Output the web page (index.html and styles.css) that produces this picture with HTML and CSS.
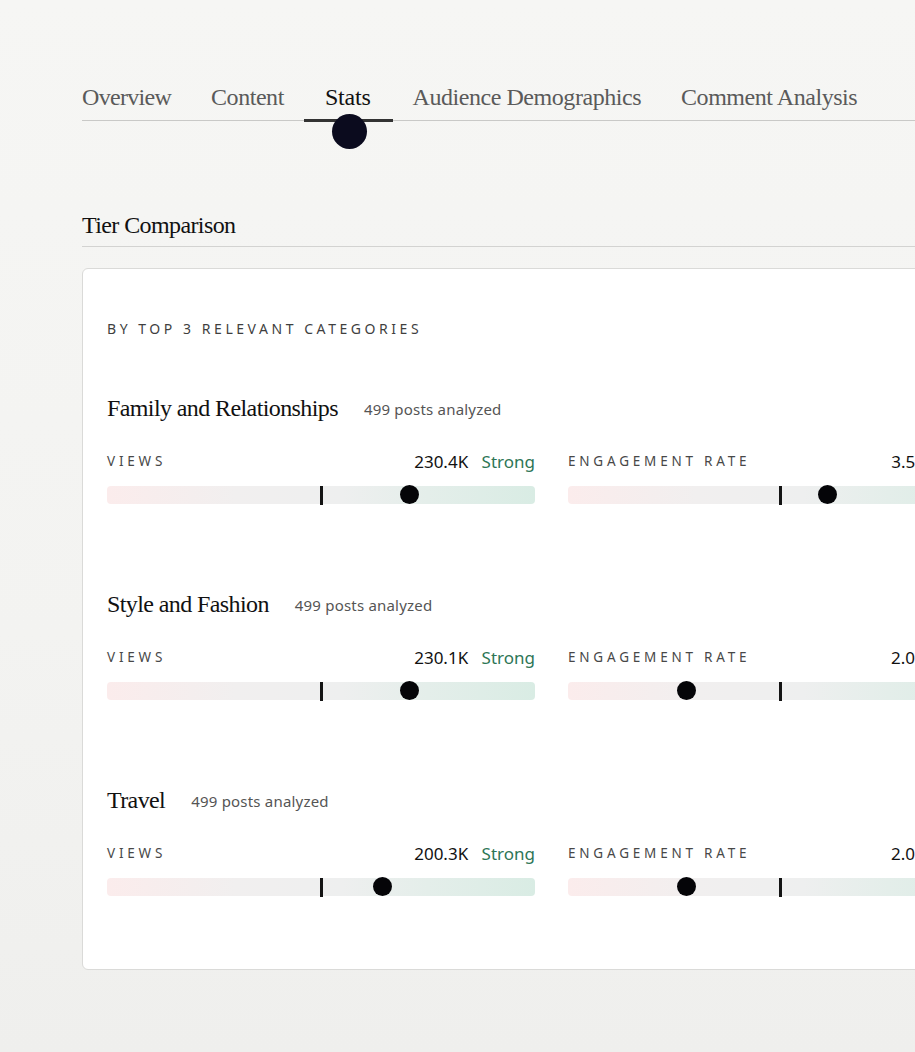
FILE: index.html
```html
<!DOCTYPE html>
<html lang="en">
<head>
  <meta charset="UTF-8" />
  <meta name="viewport" content="width=device-width, initial-scale=1.0"/>
  <title>Creator Stats - Tier Comparison</title>
  <link rel="stylesheet" href="styles.css">
</head>
<body>
  <div class="page">
    <nav class="tabs">
      <a class="tab">Overview</a>
      <a class="tab">Content</a>
      <a class="tab active">Stats</a>
      <a class="tab">Audience Demographics</a>
      <a class="tab">Comment Analysis</a>
    </nav>

    <h2 class="section-title">Tier Comparison</h2>

    <div class="card">
      <p class="card-label">By top 3 relevant categories</p>

      <div class="category">
        <div class="category-head">
          <h3>Family and Relationships</h3>
          <span class="posts">499 posts analyzed</span>
        </div>
        <div class="metrics">
          <div class="metric">
            <div class="metric-head">
              <span class="metric-name">Views</span>
              <span class="metric-value">230.4K <em class="good">Strong</em></span>
            </div>
            <div class="bar">
              <span class="tick" style="left: 50%"></span>
              <span class="dot" style="left: 70.6%"></span>
            </div>
          </div>
          <div class="metric">
            <div class="metric-head">
              <span class="metric-name">Engagement Rate</span>
              <span class="metric-value">3.55% <em class="good">Good</em></span>
            </div>
            <div class="bar">
              <span class="tick" style="left: 49.5%"></span>
              <span class="dot" style="left: 60.5%"></span>
            </div>
          </div>
        </div>
      </div>

      <div class="category">
        <div class="category-head">
          <h3>Style and Fashion</h3>
          <span class="posts">499 posts analyzed</span>
        </div>
        <div class="metrics">
          <div class="metric">
            <div class="metric-head">
              <span class="metric-name">Views</span>
              <span class="metric-value">230.1K <em class="good">Strong</em></span>
            </div>
            <div class="bar">
              <span class="tick" style="left: 50%"></span>
              <span class="dot" style="left: 70.6%"></span>
            </div>
          </div>
          <div class="metric">
            <div class="metric-head">
              <span class="metric-name">Engagement Rate</span>
              <span class="metric-value">2.01% <em class="weak">Weak</em></span>
            </div>
            <div class="bar">
              <span class="tick" style="left: 49.5%"></span>
              <span class="dot" style="left: 27.6%"></span>
            </div>
          </div>
        </div>
      </div>

      <div class="category">
        <div class="category-head">
          <h3>Travel</h3>
          <span class="posts">499 posts analyzed</span>
        </div>
        <div class="metrics">
          <div class="metric">
            <div class="metric-head">
              <span class="metric-name">Views</span>
              <span class="metric-value">200.3K <em class="good">Strong</em></span>
            </div>
            <div class="bar">
              <span class="tick" style="left: 50%"></span>
              <span class="dot" style="left: 64.3%"></span>
            </div>
          </div>
          <div class="metric">
            <div class="metric-head">
              <span class="metric-name">Engagement Rate</span>
              <span class="metric-value">2.03% <em class="weak">Weak</em></span>
            </div>
            <div class="bar">
              <span class="tick" style="left: 49.5%"></span>
              <span class="dot" style="left: 27.6%"></span>
            </div>
          </div>
        </div>
      </div>
    </div>
  </div>
</body>
</html>
```

FILE: styles.css
```css
html {
  overflow: hidden;
}
body {
  margin: 0;
  background: linear-gradient(180deg, #f6f6f4 0%, #f3f3f1 60%, #efefed 100%);
  font-family: "Noto Sans", "Liberation Sans", sans-serif;
  color: #111;
  min-height: 1052px;
}
.page {
  width: 960px;
  margin-left: 82px;
  padding-top: 82px;
}
.tabs {
  display: flex;
  border-bottom: 1px solid #c9c9c7;
}
.tab {
  position: relative;
  padding: 0 20px 8px;
  font-family: "Liberation Serif", serif;
  font-size: 24px;
  line-height: 30px;
  letter-spacing: -0.45px;
  color: #5a5a5a;
  cursor: pointer;
}
.tab:first-child {
  padding-left: 0;
  letter-spacing: -0.7px;
}
.tab.active {
  color: #111;
  padding: 0 22px 7px 21px;
  border-bottom: 3px solid #333;
  margin-bottom: -2px;
  letter-spacing: -0.2px;
}
.tab.active::after {
  content: "";
  position: absolute;
  left: 50%;
  top: calc(100% - 5px);
  width: 35px;
  height: 35px;
  margin-left: -16px;
  border-radius: 50%;
  background: #0b0b1e;
}
.section-title {
  margin: 89px 0 0;
  padding-bottom: 6px;
  border-bottom: 1px solid #d3d3d1;
  font-family: "Liberation Serif", serif;
  font-weight: normal;
  font-size: 24px;
  line-height: 30px;
  letter-spacing: -0.6px;
  color: #111;
}
.card {
  margin-top: 21px;
  background: #fff;
  border: 1px solid #dadad8;
  border-radius: 6px;
  padding: 52px 24px 73px;
}
.card-label {
  margin: 0;
  font-size: 14px;
  line-height: 16px;
  letter-spacing: 3.55px;
  text-transform: uppercase;
  color: #3f3f3f;
}
.category {
  margin-top: 56px;
}
.category + .category {
  margin-top: 85px;
}
.category-head {
  display: flex;
  align-items: baseline;
  gap: 26px;
}
.category-head h3 {
  margin: 0;
  font-family: "Liberation Serif", serif;
  font-weight: normal;
  font-size: 24px;
  line-height: 30px;
  letter-spacing: -0.6px;
  color: #111;
}
.posts {
  position: relative;
  top: -1px;
  font-size: 15px;
  color: #555;
  letter-spacing: 0.2px;
}
.metrics {
  display: grid;
  grid-template-columns: 428px 428px;
  gap: 33px;
  margin-top: 27px;
}
.metric-head {
  display: flex;
  justify-content: space-between;
  align-items: center;
  height: 22px;
}
.metric-name {
  font-size: 13.5px;
  letter-spacing: 3.8px;
  text-transform: uppercase;
  color: #484848;
}
.metric-value {
  font-size: 17px;
  color: #111;
}
.metric-value em {
  font-style: normal;
  margin-left: 9px;
}
.good {
  color: #2e7656;
}
.weak {
  color: #b0564c;
}
.bar {
  position: relative;
  margin-top: 14px;
  height: 18px;
  border-radius: 4px;
  background: linear-gradient(90deg, #fbecec 0%, #f1efef 30%, #eeefef 55%, #e4eeea 75%, #d9ece4 100%);
}
.tick {
  position: absolute;
  top: 0;
  width: 3px;
  height: 19px;
  margin-left: -1px;
  background: #141414;
}
.dot {
  position: absolute;
  top: -1px;
  width: 19px;
  height: 19px;
  margin-left: -9px;
  border-radius: 50%;
  background: #050508;
}
```
